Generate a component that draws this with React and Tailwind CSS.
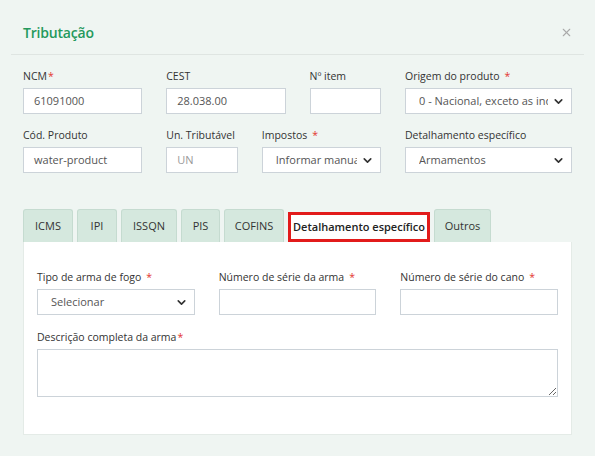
import { X, ChevronDown } from 'lucide-react';

const Label = ({ children, required, tight }) => (
  <div className="text-[10.5px] leading-[14px] text-[#333] mb-[5px] whitespace-nowrap">
    {children}
    {required && <span className={`text-[#e3342f] ${tight ? 'ml-[1px]' : 'ml-[5px]'}`}>*</span>}
  </div>
);

const Input = ({ value, muted }) => (
  <div className={`h-[26px] border border-[#ccd3d9] bg-white px-[10px] flex items-center text-[11px] ${muted ? 'text-[#999]' : 'text-[#555]'}`}>
    {value}
  </div>
);

const Select = ({ value }) => (
  <div className="h-[26px] border border-[#ccd3d9] bg-white pl-[13px] pr-[6px] flex items-center text-[11px] text-[#555] overflow-hidden">
    <span className="flex-1 whitespace-nowrap overflow-hidden">{value}</span>
    <ChevronDown className="w-[13px] h-[13px] text-[#333] flex-shrink-0 ml-1" strokeWidth={3} />
  </div>
);

const tabs = [
  { label: 'ICMS', w: 'w-[50px]' },
  { label: 'IPI', w: 'w-[40px]' },
  { label: 'ISSQN', w: 'w-[56px]' },
  { label: 'PIS', w: 'w-[39px]' },
  { label: 'COFINS', w: 'w-[60px]' },
  { label: 'Detalhamento específico', w: 'w-[142px]', active: true },
  { label: 'Outros', w: 'w-[57px]' },
];

export default function App() {
  return (
    <div
      className="w-[595px] h-[456px] bg-[#eff5f2] overflow-hidden"
      style={{ fontFamily: '"Open Sans", "Noto Sans", sans-serif' }}
    >
      {/* Header */}
      <div className="mx-[11px] h-[55px] border-b border-[#dfe5e2] flex items-center justify-between pl-[12px] pr-[11px] pt-[10px]">
        <h2 className="text-[14px] font-semibold text-[#24995c] tracking-[-0.2px]">Tributação</h2>
        <X className="w-[13px] h-[13px] text-[#aaa]" strokeWidth={2} />
      </div>

      {/* Main form */}
      <div className="px-[23px] pt-[14px]">
        <div className="grid grid-cols-12 gap-x-[24px]">
          <div className="col-span-3">
            <Label required tight>NCM</Label>
            <Input value="61091000" />
          </div>
          <div className="col-span-3">
            <Label>CEST</Label>
            <Input value="28.038.00" />
          </div>
          <div className="col-span-2">
            <Label>Nº item</Label>
            <Input value="" />
          </div>
          <div className="col-span-4">
            <Label required>Origem do produto</Label>
            <Select value="0 - Nacional, exceto as indicadas nos códigos 3 a 5" />
          </div>
        </div>

        <div className="grid grid-cols-12 gap-x-[24px] mt-[14px]">
          <div className="col-span-3">
            <Label>Cód. Produto</Label>
            <Input value="water-product" />
          </div>
          <div className="col-span-2">
            <Label>Un. Tributável</Label>
            <Input value="UN" muted />
          </div>
          <div className="col-span-3">
            <Label required>Impostos</Label>
            <Select value="Informar manualmente" />
          </div>
          <div className="col-span-4">
            <Label>Detalhamento específico</Label>
            <Select value="Armamentos" />
          </div>
        </div>

        {/* Tabs */}
        <div className="flex items-end gap-[4px] mt-[36px] h-[33px]">
          {tabs.map((t) =>
            t.active ? (
              <div
                key={t.label}
                className={`${t.w} h-[30px] bg-white border-[3px] border-[#e21b1b] flex items-center justify-center text-[11px] font-semibold text-[#222] whitespace-nowrap`}
              >
                {t.label}
              </div>
            ) : (
              <div
                key={t.label}
                className={`${t.w} h-[33px] bg-[#d5e8de] border border-[#c5dbd0] border-b-0 rounded-t-[3px] flex items-center justify-center text-[11px] text-[#333] whitespace-nowrap`}
              >
                {t.label}
              </div>
            )
          )}
        </div>

        {/* Tab panel */}
        <div className="w-[549px] h-[193px] bg-white border border-[#e4ebe7] border-t-0 px-[13px] pt-[28px]">
          <div className="grid grid-cols-3 gap-x-[24px]">
            <div>
              <Label required>Tipo de arma de fogo</Label>
              <Select value="Selecionar" />
            </div>
            <div>
              <Label required>Número de série da arma</Label>
              <Input value="" />
            </div>
            <div>
              <Label required>Número de série do cano</Label>
              <Input value="" />
            </div>
          </div>
          <div className="mt-[15px]">
            <Label required tight>Descrição completa da arma</Label>
            <textarea
              className="block w-full h-[48px] border border-[#ccd3d9] bg-white outline-none"
              readOnly
            />
          </div>
        </div>
      </div>
    </div>
  );
}
